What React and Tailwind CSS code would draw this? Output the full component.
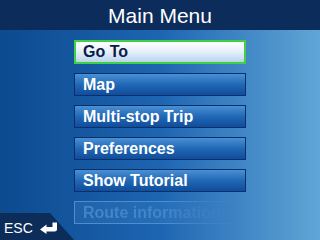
import React from 'react';

const items = [
  { label: 'Go To', state: 'active' },
  { label: 'Map' },
  { label: 'Multi-stop Trip' },
  { label: 'Preferences' },
  { label: 'Show Tutorial' },
  { label: 'Route information', state: 'disabled' },
];

const MenuButton = ({ label, state }) => {
  if (state === 'active') {
    return (
      <div className="h-[24px] w-[172px] flex items-center pl-[7px] border-2 border-[#3fd13f] bg-gradient-to-b from-[#ffffff] via-[#e6eff9] to-[#b9d3ee] text-[#0a1c48] text-[16px] font-bold leading-none">
        {label}
      </div>
    );
  }
  if (state === 'disabled') {
    return (
      <div className="h-[23px] w-[172px] flex items-center pl-[8px] border border-[#4f8ecd] bg-[#3f87cc]/25 text-[#4385c9] text-[16px] font-bold leading-none whitespace-nowrap overflow-hidden [mask-image:linear-gradient(to_right,black_55%,transparent_97%)]">
        {label}
      </div>
    );
  }
  return (
    <div className="h-[23px] w-[172px] flex items-center pl-[8px] border border-[#0b2f66] bg-gradient-to-b from-[#4a90d4] via-[#2168b6] to-[#0f4d9c] text-white text-[16px] font-bold leading-none">
      {label}
    </div>
  );
};

const ReturnArrow = () => (
  <svg width="18" height="12" viewBox="0 0 18 12" className="block">
    <path d="M0 7.5 L6.5 2.5 L6.5 5 L12.5 5 L12.5 0.5 L17 0.5 L17 7 Q17 9.5 14.5 9.5 L6.5 9.5 L6.5 12 Z" fill="white" />
  </svg>
);

export default function App() {
  return (
    <div className="relative w-[320px] h-[240px] overflow-hidden flex flex-col font-['Liberation_Sans',Arial,sans-serif]">
      <div className="h-[30px] shrink-0 bg-[#0c2d5b] flex items-center justify-center text-white text-[21px] leading-none pt-[1px]">
        Main Menu
      </div>
      <div className="flex-1 bg-gradient-to-r from-[#0d4a8e] via-[#1d65b2] to-[#60a6d6] pl-[74px] pt-[10px] flex flex-col gap-[9px]">
        {items.map((it) => (
          <MenuButton key={it.label} {...it} />
        ))}
      </div>
      <div className="absolute left-0 bottom-0 w-[74px] h-[27px] bg-[#0c2d5a] [clip-path:polygon(0_0,50px_0,74px_100%,0_100%)] flex items-center gap-[7px] pl-[4px] pt-[2px]">
        <span className="text-white text-[14px] leading-none">ESC</span>
        <ReturnArrow />
      </div>
    </div>
  );
}
